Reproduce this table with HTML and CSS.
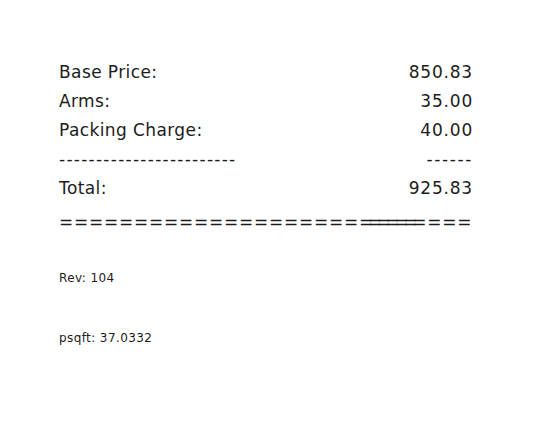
FILE: index.html
```html
<!DOCTYPE html>
<html>
<head>
<meta charset="utf-8">
<link rel="stylesheet" href="styles.css">
</head>
<body>
<div class="page">
  <table class="summary">
    <tr><td>Base Price:</td><td class="num">850.83</td></tr>
    <tr><td>Arms:</td><td class="num">35.00</td></tr>
    <tr><td>Packing Charge:</td><td class="num">40.00</td></tr>
    <tr class="rule"><td>------------------------</td><td class="num">------</td></tr>
    <tr><td>Total:</td><td class="num">925.83</td></tr>
    <tr class="eqrow"><td colspan="2">====================<span class="joined">=======</span>===</td></tr>
  </table>
  <p class="note rev">Rev: 104</p>
  <p class="note">psqft: 37.0332</p>
</div>
</body>
</html>
```
FILE: styles.css
```css
html, body {
  margin: 0;
  padding: 0;
  background: #ffffff;
}
.page {
  padding: 58px 0 0 59px;
  font-family: "DejaVu Sans", Verdana, sans-serif;
  color: #1c1c1c;
}
.summary {
  width: 414px;
  border-collapse: collapse;
  font-size: 17px;
  letter-spacing: 0.4px;
}
.summary td {
  padding: 0;
  height: 29px;
  line-height: 29px;
  white-space: nowrap;
}
.summary .num {
  text-align: right;
  letter-spacing: 0.8px;
}
.summary .rule td {
  letter-spacing: 1.26px;
}
.summary .rule .num {
  letter-spacing: 1.6px;
}
.summary .eqrow td {
  letter-spacing: 0.75px;
  padding-top: 6px;
  height: 26px;
  line-height: 26px;
}
.summary .joined {
  letter-spacing: -5.35px;
  margin-right: 6px;
}
.note {
  margin: 0;
  font-size: 12px;
  letter-spacing: 0.4px;
  line-height: 14px;
}
.rev {
  margin-top: 36px;
  margin-bottom: 46px;
}
```
